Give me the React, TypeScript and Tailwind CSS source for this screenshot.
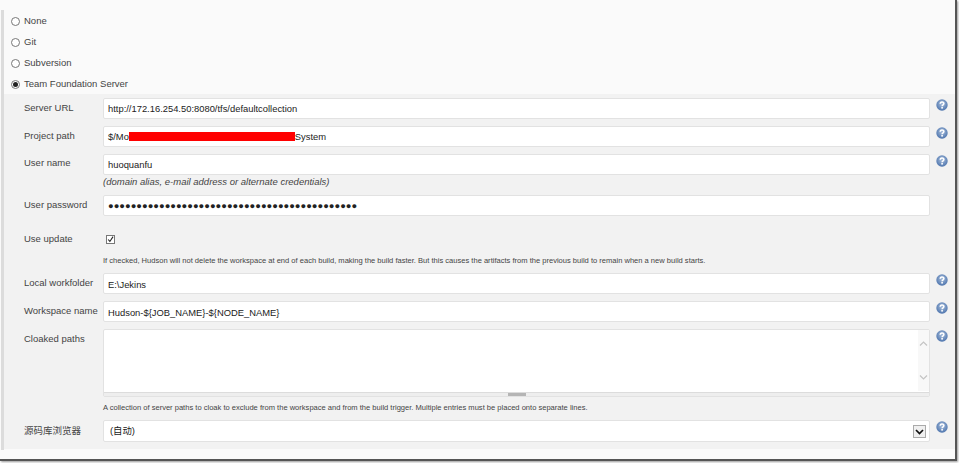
import React from "react";

const font = { fontFamily: '"Liberation Sans", "Noto Sans CJK SC", sans-serif' };

function Help({ id }: { id: string }) {
  return (
    <div className="ml-[6px] mt-[1px] shrink-0">
      <svg width="12" height="12" viewBox="0 0 12 12">
        <defs>
          <radialGradient id={id} cx="50%" cy="40%" r="60%">
            <stop offset="0%" stopColor="#a9bfdc" />
            <stop offset="100%" stopColor="#4d74ad" />
          </radialGradient>
        </defs>
        <circle cx="6" cy="6" r="5.7" fill={`url(#${id})`} />
        <path d="M4.2 4.7 C4.2 2.4 7.9 2.4 7.9 4.5 C7.9 5.8 6.1 5.8 6.1 7.2" fill="none" stroke="#fff" strokeWidth="1.5" />
        <rect x="5.3" y="8" width="1.6" height="1.6" fill="#fff" />
      </svg>
    </div>
  );
}

function Radio({ label, checked, mb }: { label: string; checked?: boolean; mb: string }) {
  return (
    <div className={"flex h-[13px] items-center " + mb}>
      <span className="ml-[7px] flex h-[9px] w-[9px] items-center justify-center rounded-full border border-[#777] bg-white">
        {checked && <span className="h-[5px] w-[5px] rounded-full bg-[#222]" />}
      </span>
      <span className="ml-[4px] text-[9.5px] text-[#444]">{label}</span>
    </div>
  );
}

function Field({
  label,
  value,
  h = "h-[21px]",
  mb = "mb-[7px]",
  labelClass = "pt-[3px]",
  help = true,
  extra,
}: {
  label: string;
  value: React.ReactNode;
  h?: string;
  mb?: string;
  labelClass?: string;
  help?: boolean;
  extra?: React.ReactNode;
}) {
  return (
    <div className={"flex " + mb}>
      <div className={"w-[79px] shrink-0 text-[9.5px] leading-[13px] text-[#444] " + labelClass}>{label}</div>
      <div className={"relative flex w-[827px] shrink-0 items-center rounded-[2px] border border-[#e2e2e2] bg-white pl-[4px] pt-[2px] text-[9.4px] text-[#222] " + h}>
        {value}
        {extra}
      </div>
      {help ? <Help id={"help-" + label.length} /> : null}
    </div>
  );
}

function Hint({ text, className }: { text: string; className: string }) {
  return <div className={"ml-[79px] text-[7.55px] leading-[10px] text-[#444] " + className}>{text}</div>;
}

export default function App() {
  return (
    <div className="h-[463px] w-[959px] overflow-hidden bg-white" style={font}>
      <div className="h-[461px] w-[957px] border-r-2 border-b-2 border-[#555] bg-[#fafafa] shadow-[1px_1px_2px_#999]">
        <div className="h-[10px]" />
        <div className="flex h-[440px]">
          <div className="ml-[1px] w-[3px] shrink-0 bg-[#dcdcdc]" />
          <div className="flex-1">
            <div className="pt-[5px]">
              <Radio label="None" mb="mb-[8px]" />
              <Radio label="Git" mb="mb-[8px]" />
              <Radio label="Subversion" mb="mb-[8px]" />
              <Radio label="Team Foundation Server" checked mb="mb-[0px]" />
            </div>
            <div className="mt-[3px] h-[355px] bg-[#f2f2f2] pl-[20px] pt-[4px]">
              <Field label="Server URL" value="http://172.16.254.50:8080/tfs/defaultcollection" />
              <Field
                label="Project path"
                value={
                  <>
                    <span>$/Mo</span>
                    <span className="-mt-[2px] h-[9px] w-[166px] bg-[#ff0000]" />
                    <span>System</span>
                  </>
                }
              />
              <Field label="User name" value="huoquanfu" mb="mb-[0px]" labelClass="pt-[2px]" />
              <div className="ml-[79px] mt-[1px] mb-[7px] text-[9.5px] italic leading-[12px] text-[#444]">
                (domain alias, e-mail address or alternate credentials)
              </div>
              <Field
                label="User password"
                value={<span className="text-[9.4px]">{"●".repeat(44)}</span>}
                mb="mb-[16px]"
                help={false}
              />
              <div className="flex h-[14px] items-center text-[9.5px] text-[#444]">
                <span className="w-[79px]">Use update</span>
                <span className="ml-[3px] flex h-[9px] w-[9px] items-center justify-center border border-[#777] bg-white">
                  <svg width="9" height="9" viewBox="0 0 9 9">
                    <path d="M1.5 4.5 L3.7 7 L7.8 0.8" fill="none" stroke="#222" strokeWidth="1.4" />
                  </svg>
                </span>
              </div>
              <Hint
                className="mt-[10px] mb-[7px]"
                text="If checked, Hudson will not delete the workspace at end of each build, making the build faster. But this causes the artifacts from the previous build to remain when a new build starts."
              />
              <Field label="Local workfolder" value={<span className="pt-[2px]">E:\Jekins</span>} />
              <Field label="Workspace name" value={<span className="pt-[2px]">{"Hudson-${JOB_NAME}-${NODE_NAME}"}</span>} />
              <Field
                label="Cloaked paths"
                value=""
                h="h-[68px]"
                mb="mb-[6px]"
                extra={
                  <>
                    <div className="absolute right-0 top-0 bottom-[5px] flex w-[11px] flex-col items-center justify-between bg-[#f8f8f8] py-[11px]">
                      <svg width="9" height="5" viewBox="0 0 9 5"><path d="M1 4.5 L4.5 1 L8 4.5" fill="none" stroke="#c4c4c4" strokeWidth="1.2" /></svg>
                      <svg width="9" height="5" viewBox="0 0 9 5"><path d="M1 0.5 L4.5 4 L8 0.5" fill="none" stroke="#c4c4c4" strokeWidth="1.2" /></svg>
                    </div>
                    <div className="absolute inset-x-0 bottom-0 flex h-[4px] justify-center border-t border-[#dcdcdc] bg-[#eeeeee]">
                      <span className="h-[3px] w-[18px] bg-[#b5b5b5]" />
                    </div>
                  </>
                }
              />
              <Hint
                className="mt-[4px] mb-[7px]"
                text="A collection of server paths to cloak to exclude from the workspace and from the build trigger. Multiple entries must be placed onto separate lines."
              />
              <Field
                label="源码库浏览器"
                value={<span className="-mt-[2px] pl-[2px]">(自动)</span>}
                h="h-[22px]"
                mb="mb-[0px]"
                labelClass="pt-[4px]"
                extra={
                  <span className="absolute right-[3px] top-[4px] flex h-[13px] w-[13px] items-center justify-center border border-[#aaa] bg-[#f0f0f0]">
                    <svg width="9" height="6" viewBox="0 0 9 6"><path d="M1 1 L4.5 4.5 L8 1" fill="none" stroke="#111" strokeWidth="1.7" /></svg>
                  </span>
                }
              />
            </div>
          </div>
        </div>
      </div>
    </div>
  );
}
